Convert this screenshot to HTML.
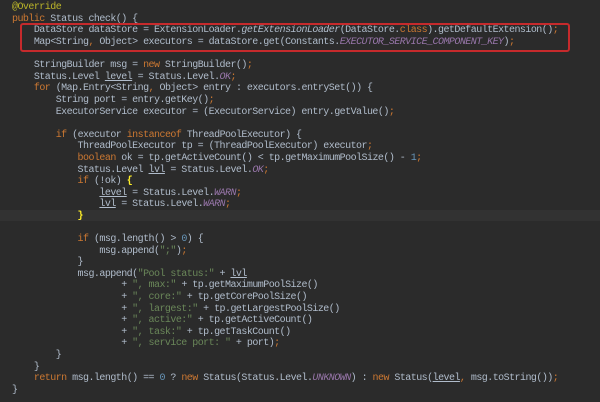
<!DOCTYPE html>
<html><head><meta charset="utf-8"><style>
html,body{margin:0;padding:0;background:#2b2b2b;width:600px;height:402px;overflow:hidden}
pre{margin:0;position:absolute;left:12px;top:2.2px;font-family:"Liberation Mono",monospace;font-size:10px;letter-spacing:-0.54px;line-height:11.6px;color:#b0bccb;white-space:pre}
.k{color:#cc7832}.s{color:#6a8759}.n{color:#6897bb}.c{color:#9876aa;font-style:italic}.a{color:#bbb529}.i{font-style:italic}.u{text-decoration:underline}
.b{color:#ffef28;font-weight:bold}
.hl{position:absolute;left:0;width:600px;top:209.7px;height:11.64px;background:#323232}
.box{position:absolute;left:20px;top:23px;width:546px;height:25px;border:2px solid #c62a2c;border-radius:3px}
</style></head><body>
<div class="hl"></div>
<pre><span class="a">@Override</span>
<span class="k">public</span> Status check() {
    DataStore dataStore = ExtensionLoader.<span class="i">getExtensionLoader</span>(DataStore.<span class="k">class</span>).getDefaultExtension()<span class="k">;</span>
    Map&lt;String<span class="k">,</span> Object&gt; executors = dataStore.get(Constants.<span class="c">EXECUTOR_SERVICE_COMPONENT_KEY</span>)<span class="k">;</span>

    StringBuilder msg = <span class="k">new</span> StringBuilder()<span class="k">;</span>
    Status.Level <span class="u">level</span> = Status.Level.<span class="c">OK</span><span class="k">;</span>
    <span class="k">for</span> (Map.Entry&lt;String<span class="k">,</span> Object&gt; entry : executors.entrySet()) {
        String port = entry.getKey()<span class="k">;</span>
        ExecutorService executor = (ExecutorService) entry.getValue()<span class="k">;</span>

        <span class="k">if</span> (executor <span class="k">instanceof</span> ThreadPoolExecutor) {
            ThreadPoolExecutor tp = (ThreadPoolExecutor) executor<span class="k">;</span>
            <span class="k">boolean</span> ok = tp.getActiveCount() &lt; tp.getMaximumPoolSize() - <span class="n">1</span><span class="k">;</span>
            Status.Level <span class="u">lvl</span> = Status.Level.<span class="c">OK</span><span class="k">;</span>
            <span class="k">if</span> (!ok) <span class="b">{</span>
                <span class="u">level</span> = Status.Level.<span class="c">WARN</span><span class="k">;</span>
                <span class="u">lvl</span> = Status.Level.<span class="c">WARN</span><span class="k">;</span>
            <span class="b">}</span>

            <span class="k">if</span> (msg.length() &gt; <span class="n">0</span>) {
                msg.append(<span class="s">";"</span>)<span class="k">;</span>
            }
            msg.append(<span class="s">"Pool status:"</span> + <span class="u">lvl</span>
                    + <span class="s">", max:"</span> + tp.getMaximumPoolSize()
                    + <span class="s">", core:"</span> + tp.getCorePoolSize()
                    + <span class="s">", largest:"</span> + tp.getLargestPoolSize()
                    + <span class="s">", active:"</span> + tp.getActiveCount()
                    + <span class="s">", task:"</span> + tp.getTaskCount()
                    + <span class="s">", service port: "</span> + port)<span class="k">;</span>
        }
    }
    <span class="k">return</span> msg.length() == <span class="n">0</span> ? <span class="k">new</span> Status(Status.Level.<span class="c">UNKNOWN</span>) : <span class="k">new</span> Status(<span class="u">level</span><span class="k">,</span> msg.toString())<span class="k">;</span>
}</pre>
<div class="box"></div>
</body></html>
